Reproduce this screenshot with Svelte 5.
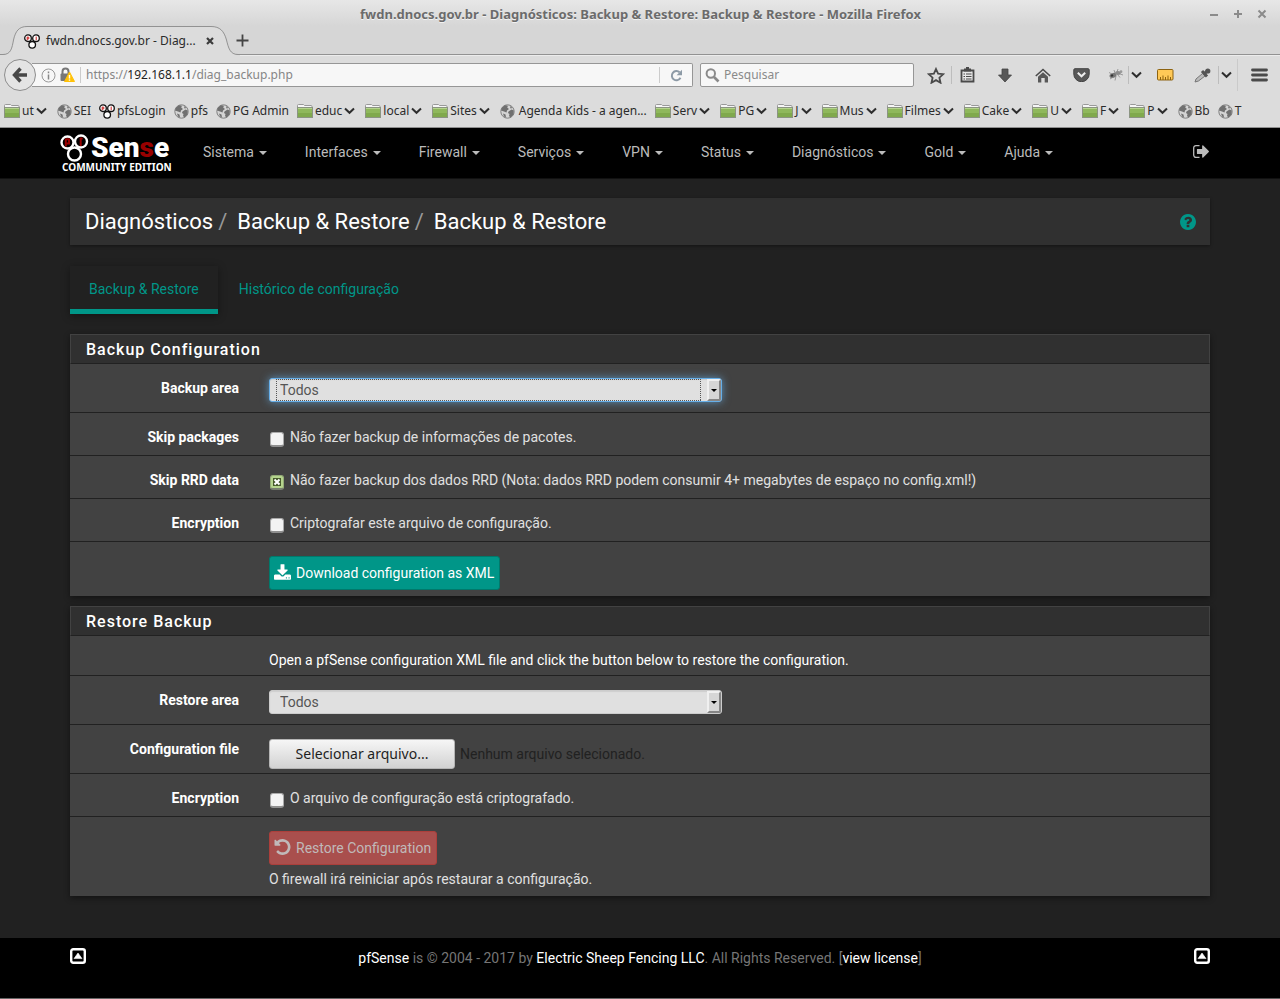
<script>
  const bookmarks = [
    { kind: 'folder', label: 'ut' },
    { kind: 'globe', label: 'SEI' },
    { kind: 'pf', label: 'pfsLogin' },
    { kind: 'globe', label: 'pfs' },
    { kind: 'globe', label: 'PG Admin' },
    { kind: 'folder', label: 'educ' },
    { kind: 'folder', label: 'local' },
    { kind: 'folder', label: 'Sites' },
    { kind: 'globe', label: 'Agenda Kids - a agen...', wide: true },
    { kind: 'folder', label: 'Serv' },
    { kind: 'folder', label: 'PG' },
    { kind: 'folder', label: 'J' },
    { kind: 'folder', label: 'Mus' },
    { kind: 'folder', label: 'Filmes' },
    { kind: 'folder', label: 'Cake' },
    { kind: 'folder', label: 'U' },
    { kind: 'folder', label: 'F' },
    { kind: 'folder', label: 'P' },
    { kind: 'globe', label: 'Bb' },
    { kind: 'globe', label: 'T' }
  ];
  const menu = ['Sistema', 'Interfaces', 'Firewall', 'Serviços', 'VPN', 'Status', 'Diagnósticos', 'Gold', 'Ajuda'];

  let skipPackages = $state(false);
  let skipRrd = $state(true);
  let encrypt = $state(false);
  let encrypted = $state(false);
</script>

{#snippet chevron()}
  <svg class="chevron" width="11" height="8" viewBox="0 0 11 8"><path d="M1 1.500 5.500 5.800 10 1.500" fill="none" stroke="#2e2e2e" stroke-width="2" /></svg>
{/snippet}

{#snippet pfMark()}
  <svg width="16" height="15" viewBox="0 0 16 15">
    <g fill="#fff" stroke="#111" stroke-width="1.300">
      <circle cx="8.200" cy="10.800" r="3.300" />
      <circle cx="4" cy="4.200" r="3.300" />
      <circle cx="12" cy="4.200" r="3.300" />
    </g>
    <path d="M3.200 2.800v3.400M3.200 3.200h1.600v1.700H3.200M12.200 2.600v3.600" fill="none" stroke="#c22" stroke-width="1" />
  </svg>
{/snippet}

{#snippet topIcon()}
  <svg width="16" height="16" viewBox="0 0 16 16">
    <rect x="1.200" y="1.200" width="13.600" height="13.600" rx="2" fill="none" stroke="#fff" stroke-width="2.400" />
    <path d="M4 10.600 8 5l4 5.600z" fill="#fff" stroke="#fff" stroke-width=".6" />
  </svg>
{/snippet}

<div class="chrome">
  <div class="titlebar">
    <span class="window-title">fwdn.dnocs.gov.br - Diagnósticos: Backup &amp; Restore: Backup &amp; Restore - Mozilla Firefox</span>
    <div class="window-controls">
      <button aria-label="Minimizar"><svg width="10" height="10" viewBox="0 0 10 10"><path d="M1 6h8" /></svg></button>
      <button aria-label="Maximizar"><svg width="10" height="10" viewBox="0 0 10 10"><path d="M1 5h8M5 1v8" /></svg></button>
      <button aria-label="Fechar"><svg width="10" height="10" viewBox="0 0 10 10"><path d="m1.500 1.500 7 7M8.500 1.500l-7 7" /></svg></button>
    </div>
  </div>

  <div class="tabstrip">
    <div class="tab">
      <svg class="tab-shape" width="240" height="30" viewBox="0 0 240 30">
        <path d="M0 28.500H3C11 28.500 12 22 13.500 14 15.500 5 19 .5 27 .5H211C220 .5 224 5 226.500 14 228.500 22 230 28.500 238 28.500H240V30H0z" fill="#dcdcdc" />
        <path d="M0 28.500H3C11 28.500 12 22 13.500 14 15.500 5 19 .5 27 .5H211C220 .5 224 5 226.500 14 228.500 22 230 28.500 238 28.500H240" fill="none" stroke="#929292" />
      </svg>
      <span class="tab-icon">{@render pfMark()}</span>
      <span class="tab-title">fwdn.dnocs.gov.br - Diag...</span>
      <button class="tab-close" aria-label="Fechar aba"><svg width="8" height="8" viewBox="0 0 8 8"><path d="m1 1 6 6M7 1 1 7" stroke="#3c3c3c" stroke-width="2.200" /></svg></button>
    </div>
    <button class="new-tab" aria-label="Nova aba"><svg width="13" height="13" viewBox="0 0 13 13"><path d="M6.500 .5v12M.5 6.500h12" stroke="#444" stroke-width="1.800" /></svg></button>
  </div>

  <div class="toolbar">
    <button class="back" aria-label="Voltar">
      <svg width="16" height="16" viewBox="0 0 16 16"><path d="M8.500 1.500 2.500 8l6 6.500M3 8h12" fill="none" stroke="#474747" stroke-width="3.400" /></svg>
    </button>
    <div class="urlbar">
      <svg width="15" height="15" viewBox="0 0 15 15"><circle cx="7.500" cy="7.500" r="6.500" fill="none" stroke="#999" /><path d="M7.500 6.500v5M7.500 3.500v1.700" stroke="#888" stroke-width="1.500" /></svg>
      <svg width="16" height="16" viewBox="0 0 16 16">
        <path d="M3.500 7V4.500a3 3 0 0 1 6 0V7" fill="none" stroke="#777" stroke-width="2" />
        <rect x="1.500" y="6.500" width="9.500" height="7.500" rx="1" fill="#777" />
        <path d="M10.500 5 15.500 14.500H5.500z" fill="#ffc107" stroke="#ffc107" stroke-linejoin="round" />
        <path d="M10.500 8v3.500M10.500 12.500v1.300" stroke="#fff" stroke-width="1.400" />
      </svg>
      <span class="url"><span>https://</span><b>192.168.1.1</b><span>/diag_backup.php</span></span>
      <button class="reload" aria-label="Recarregar">
        <svg width="13" height="13" viewBox="0 0 13 13"><path d="M10.500 8.800A4.600 4.600 0 1 1 9.600 3.300" fill="none" stroke="#8d9aa6" stroke-width="2" /><path d="M12 .8v5.400H6.600z" fill="#8d9aa6" /></svg>
      </button>
    </div>
    <label class="search">
      <svg width="15" height="15" viewBox="0 0 15 15"><circle cx="5.800" cy="5.500" r="4.200" fill="none" stroke="#8a8a8a" stroke-width="2" /><path d="m9 9 4.500 4.500" stroke="#8a8a8a" stroke-width="2.600" /></svg>
      <input type="text" placeholder="Pesquisar" aria-label="Pesquisar" />
    </label>

    <div class="tools">
      <button class="w30" aria-label="Favoritar"><svg width="18" height="17" viewBox="0 0 18 17"><path d="m9 2 2.100 4.700 5.100.5-3.800 3.500 1.100 5L9 13.100l-4.500 2.600 1.100-5L1.800 7.200l5.100-.5z" fill="none" stroke="#4a4a4a" stroke-width="1.800" /></svg></button>
      <span class="sep"></span>
      <button class="w34" aria-label="Biblioteca"><svg width="15" height="16" viewBox="0 0 15 16"><path d="M1.500 3.500h12v11h-12z" fill="#e6e6e6" stroke="#4a4a4a" stroke-width="1.800" /><path d="M4 1.500h7v3H4zM6 0h3v2H6z" fill="#4a4a4a" /><path d="M3.500 7H5M3.500 9.500H5M3.500 12H5M6 7h5.500M6 9.500h5.500M6 12h5.500" stroke="#4a4a4a" stroke-width="1.200" /></svg></button>
      <button class="w38" aria-label="Downloads"><svg width="14" height="15" viewBox="0 0 14 15"><path d="M4 1h6v6h3.500L7 14 .5 7H4z" fill="#585858" stroke="#444" stroke-width=".8" /></svg></button>
      <button class="w38" aria-label="Página inicial"><svg width="16" height="15" viewBox="0 0 16 15"><path d="M.8 8 8 1.500 15.200 8" fill="none" stroke="#4a4a4a" stroke-width="1.600" /><path d="M3 8.800 8 4.300l5 4.500V14.500H9.700V10H6.300v4.500H3z" fill="#585858" /></svg></button>
      <button class="w38" aria-label="Pocket"><svg width="17" height="14" viewBox="0 0 17 14"><path d="M.8 2Q.8.700 2 .7h13q1.200 0 1.200 1.300v4a7.700 7.700 0 0 1-15.400 0z" fill="#585858" stroke="#444" /><path d="m4.800 4.800 3.700 3.500 3.700-3.500" fill="none" stroke="#eee" stroke-width="2" /></svg></button>
      <button class="bug" aria-label="Firebug"><svg width="16" height="14" viewBox="0 0 16 14"><ellipse cx="5" cy="7.500" rx="3.600" ry="2.400" fill="#777" transform="rotate(-20 5 7.500)" /><ellipse cx="10" cy="5" rx="2.800" ry="1.900" fill="#8c8c8c" /><circle cx="4" cy="7.500" r="1.200" fill="#333" /><circle cx="13" cy="3.700" r="1.400" fill="#999" /><path d="M1 4.500 4 6M6 2l1 3M10 1l-1 3M2 11l3-2M7 12.500 8 8M12 9.500 9.500 6.500M15 7l-4-1.500" stroke="#888" stroke-width=".8" /></svg></button>
      <span class="sep"></span>
      <button class="w14" aria-label="Opções do Firebug">{@render chevron()}</button>
      <button class="w44" aria-label="Régua"><svg width="17" height="14" viewBox="0 0 17 14"><rect x=".5" y="1.500" width="15.500" height="10.500" rx="1" fill="#ffc957" stroke="#8d6311" /><path d="M3.500 12V9M6 12V7.500M8.500 12V9M11 12V7.500M13.500 12V9" stroke="#8d6311" /></svg></button>
      <button class="w31" aria-label="Conta-gotas"><svg width="17" height="15" viewBox="0 0 17 15"><path d="M1 14 2 11 8.500 5.500l2.500 2.500L4.500 13z" fill="#bbb" stroke="#777" /><path d="M8 3 13 8.500M10.500 5.500 14 2.500" stroke="#555" stroke-width="3" /><circle cx="13.800" cy="3" r="2.600" fill="#555" /></svg></button>
      <span class="sep"></span>
      <button class="w14" aria-label="Opções do conta-gotas">{@render chevron()}</button>
      <span class="sep tall"></span>
      <button class="w42" aria-label="Abrir menu"><svg width="17" height="14" viewBox="0 0 17 14"><path d="M1.500 2h14M1.500 7h14M1.500 12h14" stroke="#4a4a4a" stroke-width="2.800" stroke-linecap="round" /></svg></button>
    </div>
  </div>

  <nav class="bookmarks" aria-label="Favoritos">
    {#each bookmarks as b}
      <a href="#bookmark" class={b.kind} class:wide={b.wide}>
        {#if b.kind === 'folder'}
          <svg width="16" height="14" viewBox="0 0 16 14">
            <path d="M.5 3V1.500Q.5.500 1.500.500h5l1 1H14q1 0 1 1V4H.5z" fill="#f6f6f6" stroke="#999" />
            <rect x=".5" y="3.500" width="15" height="10" fill="#8fb85c" stroke="#8b9482" />
            <path d="M1 4.500h14" stroke="#b5d48d" /><path d="M1 9h14v4H1z" fill="#80a94d" />
          </svg>
        {:else if b.kind === 'globe'}
          <svg width="15" height="15" viewBox="0 0 15 15">
            <circle cx="7.500" cy="7.500" r="6.700" fill="#d4d4d4" stroke="#808080" />
            <path d="M2 3.500 5 1.200l3 .6-.8 1.700L9 5 7 6.500 6.500 8.500 4 7.500 1 6.500zM8.500 7.500l3-2 2.300 1-.3 4-3 3-1.500-1.500.5-2-1.500-1zM3 9.500l2.500 1 .5 3-2-1z" fill="#707070" />
            <path d="m10 2 2.500 2-2 .5z" fill="#707070" />
          </svg>
        {:else}
          {@render pfMark()}
        {/if}
        <span>{b.label}</span>
        {#if b.kind === 'folder'}{@render chevron()}{/if}
      </a>
    {/each}
  </nav>
</div>

<div class="page">
  <header class="navbar">
    <div class="container nav-inner">
      <a class="logo" href="#home" aria-label="pfSense Community Edition">
        <span class="logo-main">
          <svg width="29" height="28" viewBox="0 0 29 28">
            <g fill="#000" stroke="#fff" stroke-width="2.400">
              <circle cx="7.500" cy="8.500" r="6" /><circle cx="21" cy="7.500" r="6" /><circle cx="14.500" cy="20" r="6.500" />
            </g>
            <path d="M5.800 4.500v8M6 5.300h3v4.200H6M20.700 12V4.500h2" fill="none" stroke="#900" stroke-width="2" />
          </svg>
          <span class="sense">Sen<i>s</i>e</span>
        </span>
        <span class="edition">COMMUNITY EDITION</span>
      </a>
      <nav class="menu" aria-label="Principal">
        {#each menu as m}<a href="#menu">{m}<span class="caret"></span></a>{/each}
      </nav>
      <a class="logout" href="#logout" aria-label="Sair">
        <svg width="16" height="13" viewBox="64 256 1568 1280"><path fill="#bbb" d="M704 1440q0 4 1 20t.5 26.500-3 23.500-10 19.500-20.500 6.500h-320q-119 0-203.500-84.500t-84.500-203.500v-704q0-119 84.500-203.500t203.500-84.500h320q13 0 22.500 9.500t9.500 22.500q0 4 1 20t.5 26.500-3 23.500-10 19.500-20.500 6.500h-320q-66 0-113 47t-47 113v704q0 66 47 113t113 47h312l11.500 1 11.500 3 8 5.500 7 9 2 13.500zm928-544q0 26-19 45l-544 544q-19 19-45 19t-45-19-19-45v-288h-448q-26 0-45-19t-19-45v-384q0-26 19-45t45-19h448v-288q0-26 19-45t45-19 45 19l544 544q19 19 19 45z" /></svg>
      </a>
    </div>
  </header>

  <main class="container">
    <div class="crumbs">
      <ol><li>Diagnósticos</li><li>Backup &amp; Restore</li><li>Backup &amp; Restore</li></ol>
      <a href="#help" aria-label="Ajuda">
        <svg width="16" height="16" viewBox="128 128 1536 1536"><path fill="#009688" d="M1024 1376v-192q0-14-9-23t-23-9h-192q-14 0-23 9t-9 23v192q0 14 9 23t23 9h192q14 0 23-9t9-23zm256-672q0-88-55.500-163t-138.500-116-170-41q-243 0-371 213-15 24 8 42l132 100q7 6 19 6 16 0 25-12 53-68 86-92 34-24 86-24 48 0 85.500 26t37.500 59q0 38-20 61t-68 45q-63 28-115.500 86.500t-52.500 125.500v36q0 14 9 23t23 9h192q14 0 23-9t9-23q0-19 21.500-49.500t54.500-49.500q32-18 49-28.500t46-35 44.500-48 28-60.500 12.500-81zm384 192q0 209-103 385.500t-279.500 279.500-385.500 103-385.500-103-279.500-279.500-103-385.500 103-385.500 279.500-279.500 385.500-103 385.500 103 279.500 279.500 103 385.500z" /></svg>
      </a>
    </div>

    <nav class="tabs" aria-label="Seções">
      <a class="active" href="#backup">Backup &amp; Restore</a>
      <a href="#history">Histórico de configuração</a>
    </nav>

    <section class="panel">
      <h2>Backup Configuration</h2>
      <div class="row">
        <label class="name" for="backup-area">Backup area</label>
        <div class="select focused"><select id="backup-area"><option>Todos</option></select></div>
      </div>
      <div class="row check-row">
        <span class="name">Skip packages</span>
        <label class="check"><input type="checkbox" bind:checked={skipPackages} />Não fazer backup de informações de pacotes.</label>
      </div>
      <div class="row check-row">
        <span class="name">Skip RRD data</span>
        <label class="check"><input type="checkbox" bind:checked={skipRrd} />Não fazer backup dos dados RRD (Nota: dados RRD podem consumir 4+ megabytes de espaço no config.xml!)</label>
      </div>
      <div class="row check-row">
        <span class="name">Encryption</span>
        <label class="check"><input type="checkbox" bind:checked={encrypt} />Criptografar este arquivo de configuração.</label>
      </div>
      <div class="row action-row">
        <span></span>
        <div>
          <button class="btn primary">
            <svg width="17" height="16" viewBox="0 0 1664 1536"><path fill="#fff" d="M1280 1344q0-26-19-45t-45-19-45 19-19 45 19 45 45 19 45-19 19-45zm256 0q0-26-19-45t-45-19-45 19-19 45 19 45 45 19 45-19 19-45zm128-224v320q0 40-28 68t-68 28h-1472q-40 0-68-28t-28-68v-320q0-40 28-68t68-28h465l135 136q58 56 136 56t136-56l136-136h464q40 0 68 28t28 68zm-325-569q17 41-14 70l-448 448q-18 19-45 19t-45-19l-448-448q-31-29-14-70 17-39 59-39h256v-448q0-26 19-45t45-19h256q26 0 45 19t19 45v448h256q42 0 59 39z" /></svg>
            Download configuration as XML
          </button>
        </div>
      </div>
    </section>

    <section class="panel">
      <h2>Restore Backup</h2>
      <div class="row text-row">
        <span></span>
        <span class="bright">Open a pfSense configuration XML file and click the button below to restore the configuration.</span>
      </div>
      <div class="row">
        <label class="name" for="restore-area">Restore area</label>
        <div class="select"><select id="restore-area"><option>Todos</option></select></div>
      </div>
      <div class="row file-row">
        <label class="name" for="config-file">Configuration file</label>
        <div class="file">
          <input class="hidden-file" type="file" id="config-file" />
          <label class="file-button" for="config-file">Selecionar arquivo...</label>
          <span class="file-name">Nenhum arquivo selecionado.</span>
        </div>
      </div>
      <div class="row check-row">
        <span class="name">Encryption</span>
        <label class="check"><input type="checkbox" bind:checked={encrypted} />O arquivo de configuração está criptografado.</label>
      </div>
      <div class="row action-row">
        <span></span>
        <div>
          <button class="btn danger" disabled>
            <svg width="17" height="16" viewBox="128 128 1536 1536"><path fill="#c0b9b9" d="M1664 896q0 156-61 298t-164 245-245 164-298 61q-172 0-327-72.500t-264-204.500q-7-10-6.500-22.500t8.500-20.500l137-138q10-9 25-9 16 2 23 12 73 95 179 147t225 52q104 0 198.500-40.500t163.500-109.500 109.500-163.500 40.500-198.500-40.500-198.500-109.500-163.500-163.500-109.500-198.500-40.500q-98 0-188 35.500t-160 101.500l137 138q31 30 14 69-17 40-59 40h-448q-26 0-45-19t-19-45v-448q0-42 40-59 39-17 69 14l130 129q107-101 244.500-156.500t284.500-55.500q156 0 298 61t245 164 164 245 61 298z" /></svg>
            Restore Configuration
          </button>
          <p>O firewall irá reiniciar após restaurar a configuração.</p>
        </div>
      </div>
    </section>
  </main>

  <footer>
    <div class="container foot-inner">
      <a href="#top" aria-label="Topo">{@render topIcon()}</a>
      <span class="legal"><a href="#pfsense">pfSense</a> is © 2004 - 2017 by <a href="#esf">Electric Sheep Fencing LLC</a>. All Rights Reserved. [<a href="#license">view license</a>]</span>
      <a href="#top" aria-label="Topo">{@render topIcon()}</a>
    </div>
  </footer>
</div>

<style>
  :global(body) { margin: 0; background: #212121; }
  :global(#app) { min-height: 100vh; display: flex; flex-direction: column; }
  *, *::before, *::after { box-sizing: border-box; }
  a { color: inherit; text-decoration: none; }
  svg { display: block; flex: none; }
  button { background: none; border: 0; padding: 0; margin: 0; font: inherit; color: inherit; }

  .chrome { font: 12px/16px "Noto Sans", sans-serif; color: #2b2b2b; background: #dcdcdc; border-bottom: 1px solid #8f8f8f; }
  .titlebar { display: grid; grid-template-columns: 1fr auto 1fr; height: 26px; align-items: center; padding: 2px 13px 0 14px; background: linear-gradient(#e7e7e7, #d6d6d6); }
  .window-title { grid-column: 2; font-size: 13px; font-weight: 700; color: #6b6b6b; text-shadow: 0 1px #f2f2f2; white-space: nowrap; }
  .window-controls { display: flex; gap: 14px; justify-content: flex-end; }
  .window-controls path { stroke: #8b8b8b; stroke-width: 2; fill: none; }

  .tabstrip { display: flex; height: 29px; background: #d6d6d6; box-shadow: inset 0 -1px #929292; }
  .tab { position: relative; width: 240px; display: flex; align-items: center; padding: 0 26px 0 24px; height: 30px; }
  .tab-shape { position: absolute; inset: 0; }
  .tab-icon, .tab-title, .tab-close { position: relative; }
  .tab-title { margin-left: 6px; white-space: nowrap; }
  .tab-close { margin-left: auto; }
  .new-tab { margin-left: -4px; }

  .toolbar { display: flex; align-items: center; height: 38px; padding: 1px 0 0 4px; border-top: 1px solid #ececec; }
  .back { display: grid; place-items: center; width: 32px; height: 32px; border: 1px solid #8d8d8d; border-radius: 50%; background: #e4e4e4; position: relative; }
  .urlbar { flex: 1; display: flex; align-items: center; height: 24px; margin-left: -4px; padding-left: 9px; background: #f7f7f7; border: 1px solid #969696; border-left: 0; border-radius: 0 2px 2px 0; gap: 3px; }
  .url { flex: 1; display: block; border-left: 1px solid #ccc; padding-left: 5px; margin-left: 2px; color: #868686; white-space: nowrap; }
  .url b { font-weight: 400; color: #1e1e1e; }
  .reload { display: grid; place-items: center; width: 33px; height: 16px; border-left: 1px solid #ccc; }
  .search { display: flex; align-items: center; gap: 4px; width: 214px; height: 24px; margin-left: 7px; padding: 0 4px; border: 1px solid #969696; border-radius: 2px; background: #f7f7f7; }
  .search input { flex: 1; min-width: 0; border: 0; padding: 0; background: none; font: inherit; outline: 0; }
  .search input::placeholder { color: #8a8a8a; opacity: 1; }
  .tools { display: flex; align-items: center; padding-left: 7px; }
  .tools button { display: grid; place-items: center; height: 24px; }
  .w30 { width: 30px; }
  .tools .w34 { width: 34px; padding-right: 4px; }
  .w38 { width: 38px; }
  .w14 { width: 14px; }
  .w44 { width: 44px; }
  .w31 { width: 31px; }
  .w42 { width: 42px; }
  .tools .bug { width: 28px; padding: 0 4px 0 8px; }
  .sep { width: 1px; height: 18px; background: #bdbdbd; }
  .sep.tall { height: 32px; margin-left: 4px; background: #cacaca; }

  .bookmarks { display: flex; align-items: center; height: 34px; padding: 2px 4px 0; overflow: hidden; white-space: nowrap; }
  .bookmarks a { display: flex; align-items: center; gap: 2px; margin-right: 8px; }
  .bookmarks .folder { margin-right: 10px; }
  .bookmarks .wide { gap: 4px; }

  .page { flex: 1; display: flex; flex-direction: column; background: #212121; color: #e0e0e0; font: 14px/20px Roboto, sans-serif; }
  .container { width: 100%; max-width: 1140px; margin: 0 auto; }
  .navbar { background: #000; border-bottom: 1px solid #111; }
  .nav-inner { display: flex; height: 50px; }
  .logo { width: 114px; margin-left: -10px; padding-top: 6px; color: #fff; }
  .logo-main { display: flex; align-items: center; height: 28px; gap: 2px; }
  .sense { font: 900 28px/28px Roboto, sans-serif; }
  .sense i { font-style: normal; color: #900; }
  .edition { display: block; padding-left: 2px; font: 700 10px/10px "Noto Sans", sans-serif; white-space: nowrap; }
  .menu { display: flex; flex: 1; padding-left: 10px; }
  .menu a { display: flex; align-items: center; padding: 0 19px 2px; gap: 5px; color: #bbb; height: 50px; }
  .caret { border: 4px solid transparent; border-top-color: #bbb; border-bottom: 0; margin-top: 2px; }
  .logout { display: grid; align-items: center; padding: 0 1px 4px 0; }

  main { padding-top: 19px; padding-bottom: 42px; }
  .crumbs { display: flex; align-items: center; justify-content: space-between; height: 47px; padding: 0 14px 0 15px; background: #303030; box-shadow: 0 1px 3px rgba(0, 0, 0, .4); }
  .crumbs ol { display: flex; list-style: none; margin: 0; padding: 0; font-size: 22px; line-height: 30px; color: #fff; }
  .crumbs li + li::before { content: "/"; color: #999; padding: 0 10px 0 5px; }
  .tabs { display: flex; margin: 21px 0 20px; height: 48px; color: #009688; }
  .tabs a { padding: 13px 19px 0; border-bottom: 5px solid transparent; margin-right: 2px; }
  .tabs .active { border-color: #009688; box-shadow: 0 2px 8px rgba(0, 0, 0, .4); }

  .panel { background: #424242; box-shadow: 0 2px 6px rgba(0, 0, 0, .45); margin-bottom: 10px; }
  .panel:last-child { margin-bottom: 0; }
  .panel h2 { margin: 0; height: 30px; padding: 0 15px; font-size: 16px; line-height: 29px; font-weight: 500; letter-spacing: 1px; color: #fff; background: #303030; border: 1px solid #424242; border-bottom-color: #212121; }
  .row { display: grid; grid-template-columns: 169px 1fr; column-gap: 30px; padding: 14px 0 10px; border-bottom: 1px solid #212121; }
  .row:last-child { border-bottom: 0; }
  .check-row { padding-bottom: 8px; }
  .text-row { padding-bottom: 5px; }
  .file-row { padding-bottom: 4px; }
  .action-row { padding-bottom: 6px; }
  .name { text-align: right; font-weight: 700; color: #fff; }
  .bright { color: #fff; }

  .select { position: relative; max-width: 453px; height: 24px; border-radius: 3px; }
  .select select { display: block; appearance: none; width: 100%; height: 24px; padding: 0 20px 0 10px; border: 1px solid #ccc; border-radius: 3px; background: #e0e0e0; box-shadow: inset 0 1px 1px rgba(0, 0, 0, .08); color: #555; font: inherit; line-height: 20px; outline: 0; }
  .select::after { content: ""; position: absolute; right: 1px; top: 1px; width: 14px; height: 22px; border: 2px solid #f0f0f0; border-right-color: #858585; border-bottom-color: #858585; border-radius: 0 2px 2px 0; background: #d6d6d6; pointer-events: none; }
  .select::before { content: ""; position: absolute; z-index: 1; right: 5px; top: 11px; border: 3px solid transparent; border-top-color: #000; border-bottom: 0; pointer-events: none; }
  .focused { box-shadow: 0 0 8px rgba(102, 175, 233, .7); }
  .focused select {
    border-color: #66afe9;
    background-color: #e0e0e0;
    background-image:
      repeating-linear-gradient(90deg, #555 0 1px, transparent 1px 2px),
      repeating-linear-gradient(90deg, #555 0 1px, transparent 1px 2px),
      repeating-linear-gradient(#555 0 1px, transparent 1px 2px),
      repeating-linear-gradient(#555 0 1px, transparent 1px 2px);
    background-repeat: no-repeat;
    background-size: 425px 1px, 425px 1px, 1px 22px, 1px 22px;
    background-position: 6px 0, 6px 100%, 6px 0, 430px 0;
  }

  .check { display: flex; align-items: flex-start; gap: 5px; }
  .check input { appearance: none; flex: none; width: 14px; height: 15px; margin: 5px 1px 0; border: 1px solid #aaa; border-bottom: 2px solid #8f8f8f; border-radius: 3px; background: #f3f3f3; }
  .check input:checked { border-color: #93aa76; border-bottom-color: #787f70; background: #b5d48d url("data:image/svg+xml,%3Csvg xmlns='http://www.w3.org/2000/svg' viewBox='0 0 8 8'%3E%3Crect width='8' height='8' fill='%23465a2b'/%3E%3Cpath d='M1.500 1.500l5 5M6.500 1.500L1.500 6.500' stroke='%23fff' stroke-width='2'/%3E%3C/svg%3E") center / 8px 8px no-repeat; }

  .btn { display: inline-flex; align-items: center; gap: 5px; height: 34px; padding: 0 5px 0 4px; border: 1px solid #00796b; border-radius: 3px; color: #fff; vertical-align: top; white-space: nowrap; }
  .primary { background: #009688; }
  .btn svg { margin-bottom: 2px; }
  .danger { background: #a94f4d; border-color: #ac3f3b; color: #c0b9b9; }
  .action-row p { margin: 4px 0 1px; }

  .file { display: flex; align-items: center; gap: 5px; }
  .hidden-file { position: absolute; width: 1px; height: 1px; opacity: 0; }
  .file-button { display: block; width: 186px; height: 30px; text-align: center; font: 14px/28px "Noto Sans", sans-serif; color: #1e1e1e; background: linear-gradient(#f6f6f6, #d2d2d2); border: 1px solid #b5b5b5; border-radius: 3px; }
  .file-name { color: #212121; }

  footer { flex: 1; background: #000; border-bottom: 1px solid #666; color: #757575; }
  .foot-inner { display: flex; justify-content: space-between; padding-top: 10px; }
  .legal a { color: #fff; }
</style>
